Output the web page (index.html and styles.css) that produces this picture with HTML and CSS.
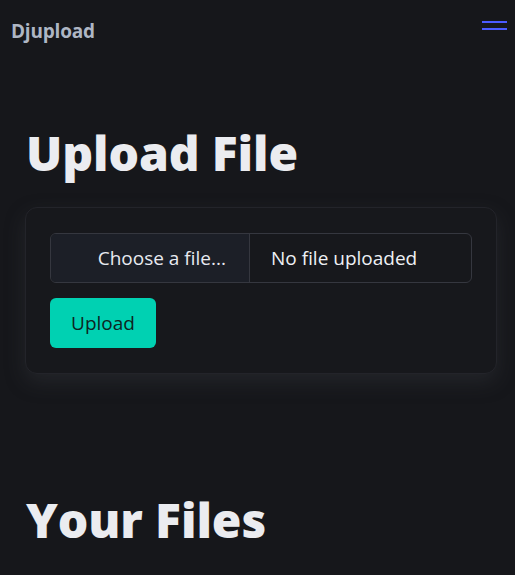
FILE: index.html
```html
<!DOCTYPE html>
<html>
<head>
<meta charset="utf-8">
<link rel="stylesheet" href="styles.css">
</head>
<body>
<nav class="navbar">
  <a class="brand">Djupload</a>
  <div class="burger"><span></span><span></span></div>
</nav>
<main class="main">
  <section class="section">
    <h1 class="title">Upload File</h1>
    <div class="card">
      <div class="file-input">
        <span class="file-cta">Choose a file...</span>
        <span class="file-name">No file uploaded</span>
      </div>
      <button class="btn">Upload</button>
    </div>
  </section>
  <section class="section files">
    <h1 class="title">Your Files</h1>
  </section>
</main>
</body>
</html>
```
FILE: styles.css
```css
* { box-sizing: border-box; }
html, body { margin: 0; padding: 0; background: #16171b; }
body { font-family: "Open Sans", "Noto Sans", sans-serif; color: #e6e8ee; width: 515px; height: 575px; overflow: hidden; }
.navbar { display: flex; justify-content: space-between; align-items: flex-start; height: 64px; padding: 0 8px 0 11px; }
.brand { font-weight: 700; font-size: 19px; color: #aeb6c4; margin-top: 18px; letter-spacing: -0.2px; }
.burger { display: flex; flex-direction: column; gap: 5px; margin-top: 21px; }
.burger span { display: block; width: 25px; height: 2px; background: #4b5bff; }
.main { padding: 0 18px 0 25px; }
.section { padding-top: 65px; }
.title { font-family: "Open Sans", sans-serif; font-weight: 800; font-size: 48px; line-height: 1; margin: 0 0 30px 1px; color: #ebecf0; letter-spacing: -0.1px; }
.card { background: #17181c; border: 1px solid #23242a; border-radius: 12px; padding: 25px 24px 25px 24px; box-shadow: 0 8px 20px rgba(60,62,70,0.35); }
.file-input { display: flex; height: 50px; border: 1px solid #35373f; border-radius: 6px; overflow: hidden; }
.file-cta { width: 199px; background: #1c1f27; border-right: 1px solid #35373f; display: flex; align-items: center; justify-content: flex-end; padding-right: 23px; font-size: 19px; color: #e8eaf0; }
.file-name { flex: 1; display: flex; align-items: center; padding-left: 21px; font-size: 19px; color: #eef0f4; }
.btn { margin-top: 15px; height: 50px; width: 106px; background: #00d1b2; border: none; border-radius: 6px; color: #0e2522; font-family: inherit; font-size: 19px; display: flex; align-items: center; justify-content: center; padding: 0; }
.files { padding-top: 122px; }
```
